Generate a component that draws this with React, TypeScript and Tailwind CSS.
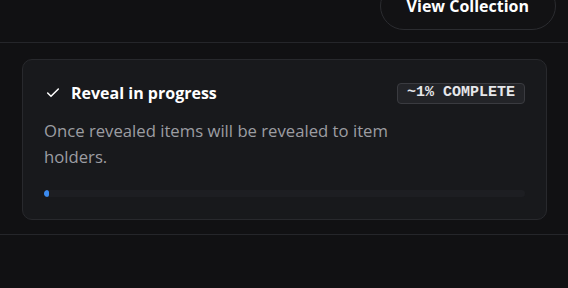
import { Check } from "lucide-react";

const App = () => {
  const pct = 1;

  return (
    <div
      className="min-h-screen w-full bg-[#111113] text-white overflow-hidden"
      style={{ fontFamily: '"Open Sans", "Noto Sans", sans-serif' }}
    >
      {/* header with button */}
      <div className="flex justify-end border-b border-[#25262a] pr-3 pb-[12px] -mt-[18px]">
        <button className="h-12 px-[26px] rounded-full border border-[#2b2c30] bg-[#121214] text-[16px] font-bold text-white">
          View Collection
        </button>
      </div>

      {/* reveal card */}
      <div className="border-b border-[#25262a] pl-[22px] pr-[21px] pt-4 pb-[14px]">
        <div className="rounded-[10px] border border-[#28292d] bg-[#18191c] px-[21px] pt-[21px] pb-[22px]">
          <div className="flex items-center justify-between">
            <div className="flex items-center gap-[10px] pl-px">
              <Check className="w-4 h-4 text-white" strokeWidth={2.25} />
              <span className="text-[16px] font-bold text-white">Reveal in progress</span>
            </div>
            <span
              className="h-[21px] flex items-center rounded-[4px] border border-[#3a3b40] bg-[#232428] px-[9px] text-[15px] font-bold text-[#e6e7ea]"
              style={{ fontFamily: '"Liberation Mono", "DejaVu Sans Mono", monospace' }}
            >
              ~{pct}% COMPLETE
            </span>
          </div>
          <p className="mt-[13px] max-w-[370px] text-[16.7px] leading-[26px] text-[#9c9da2]">
            Once revealed items will be revealed to item holders.
          </p>
          <div className="mt-[20px] h-[7px] w-full rounded-full bg-[#1d1e22] overflow-hidden">
            <div className="h-full rounded-full bg-[#3b8bf0]" style={{ width: `${pct}%` }} />
          </div>
        </div>
      </div>
    </div>
  );
};

export default App;
